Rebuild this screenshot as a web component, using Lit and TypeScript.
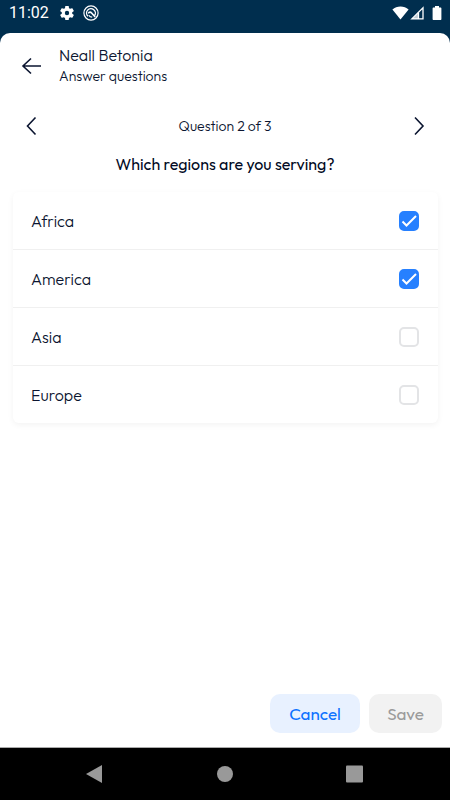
import { LitElement, html, css } from "lit";
import { customElement, state } from "lit/decorators.js";

interface Region {
  name: string;
  checked: boolean;
}

@customElement("status-bar")
class StatusBar extends LitElement {
  static styles = css`
    :host {
      display: flex;
      align-items: center;
      height: 26px;
      padding: 0 8px 0 9px;
      color: #fff;
      font: 16px/26px Roboto, sans-serif;
    }
    svg {
      display: block;
    }
    .left,
    .right {
      display: flex;
      align-items: center;
    }
    .left {
      flex: 1;
      gap: 8px;
    }
    .time {
      margin-right: 2px;
    }
    .right {
      gap: 1px;
    }
    .battery {
      margin-left: 7px;
    }
  `;

  render() {
    return html`
      <div class="left">
        <span class="time">11:02</span>
        <svg width="16" height="16" viewBox="1 1 22 22" fill="#fff" aria-hidden="true">
          <path
            d="M19.14 12.94c.04-.3.06-.61.06-.94s-.02-.64-.07-.94l2.03-1.58c.18-.14.23-.41.12-.61l-1.92-3.32c-.12-.22-.37-.29-.59-.22l-2.39.96c-.5-.38-1.03-.7-1.62-.94l-.36-2.54c-.04-.24-.24-.41-.48-.41h-3.84c-.24 0-.43.17-.47.41l-.36 2.54c-.59.24-1.13.57-1.62.94l-2.39-.96c-.22-.08-.47 0-.59.22L2.74 8.87c-.12.21-.08.47.12.61l2.03 1.58c-.05.3-.09.63-.09.94s.02.64.07.94l-2.03 1.58c-.18.14-.23.41-.12.61l1.92 3.32c.12.22.37.29.59.22l2.39-.96c.5.38 1.03.7 1.62.94l.36 2.54c.05.24.24.41.48.41h3.84c.24 0 .44-.17.47-.41l.36-2.54c.59-.24 1.13-.56 1.62-.94l2.39.96c.22.08.47 0 .59-.22l1.92-3.32c.12-.22.07-.47-.12-.61l-2.01-1.58zM12 15a3 3 0 1 1 0-6 3 3 0 0 1 0 6z"
          />
        </svg>
        <svg width="16" height="16" viewBox="0 0 16 16" fill="none" stroke="#fff" aria-hidden="true">
          <circle cx="8" cy="8" r="7.100" stroke-width="1.200" />
          <path d="M5 11.300A4.400 4.400 0 1 1 11.400 10.800" stroke-width="1.400" />
          <path d="M5.200 8.300C6.200 6.700 7.800 6.900 8.600 8.100L12.200 12" stroke-width="1.600" />
          <path d="M5.800 10.300c.8 1.200 2 1.900 3.400 1.900" stroke-width="1.200" />
        </svg>
      </div>
      <div class="right">
        <svg width="17" height="14" viewBox="0 0 17 14" fill="#fff" aria-hidden="true">
          <path d="M8.5 13.6.4 3.6C2.6 1.5 5.4.5 8.500.5s5.900 1 8.100 3.100z" />
        </svg>
        <svg width="14" height="14" viewBox="0 0 14 14" aria-hidden="true">
          <path d="M1.800 12.900 13 1.700v11.200z" fill="none" stroke="#fff" stroke-width="1.300" />
          <path d="M8.500 13V6.500" fill="none" stroke="#fff" stroke-width="1.300" />
          <path d="M2 13 8.500 6.500V13z" fill="#fff" fill-opacity="0.75" />
        </svg>
        <svg class="battery" width="10" height="14" viewBox="0 0 10 14" fill="#fff" aria-hidden="true">
          <path d="M3 0h4v1.400h1.400c.6 0 1 .4 1 1V13c0 .6-.4 1-1 1H1.600c-.6 0-1-.4-1-1V2.400c0-.6.4-1 1-1H3z" />
        </svg>
      </div>
    `;
  }
}

@customElement("navigation-bar")
class NavigationBar extends LitElement {
  static styles = css`
    :host {
      box-sizing: border-box;
      display: flex;
      justify-content: center;
      align-items: center;
      gap: 106px;
      height: 53px;
      background: #000;
      border-top: 1px solid #aaa;
    }
    button {
      display: block;
      padding: 0;
      border: 0;
      background: none;
      cursor: pointer;
    }
    svg {
      display: block;
      fill: #999;
    }
  `;

  render() {
    return html`
      <button aria-label="Back">
        <svg width="24" height="24" viewBox="0 0 24 24"><path d="M3 12 19 3v18z" /></svg>
      </button>
      <button aria-label="Home">
        <svg width="24" height="24" viewBox="0 0 24 24"><circle cx="12" cy="12" r="8" /></svg>
      </button>
      <button aria-label="Overview">
        <svg width="24" height="24" viewBox="0 0 24 24"><rect x="3" y="3.500" width="17" height="17" rx="1" /></svg>
      </button>
    `;
  }
}

@customElement("app-root")
class AppRoot extends LitElement {
  @state() private regions: Region[] = [
    { name: "Africa", checked: true },
    { name: "America", checked: true },
    { name: "Asia", checked: false },
    { name: "Europe", checked: false },
  ];

  static styles = css`
    :host {
      display: flex;
      flex-direction: column;
      min-height: 100vh;
      background: #002e4e;
      color: #0b1530;
      font-family: Outfit, Lato, sans-serif;
      font-weight: 300;
    }
    * {
      box-sizing: border-box;
    }
    svg {
      display: block;
      fill: none;
    }
    button {
      font: inherit;
      border: 0;
      cursor: pointer;
    }
    .sheet {
      display: flex;
      flex-direction: column;
      flex: 1;
      margin-top: 7px;
      background: #fff;
      border-radius: 10px 10px 0 0;
    }
    .header {
      display: flex;
      align-items: center;
      gap: 15px;
      padding: 12px 20px 0;
    }
    .icon {
      padding: 0;
      background: none;
      color: #0b1530;
    }
    .name,
    .subtitle,
    .step,
    .question {
      margin: 0;
      font-weight: 300;
    }
    .name {
      font-size: 16px;
      line-height: 21px;
    }
    .subtitle {
      font-size: 14px;
      line-height: 21px;
    }
    .pager {
      display: flex;
      align-items: center;
      justify-content: space-between;
      padding: 0 19px;
      margin-top: 27px;
    }
    .step {
      font-size: 14px;
      line-height: 24px;
    }
    .question {
      margin-top: 14px;
      text-align: center;
      font-size: 16px;
      font-weight: 400;
      line-height: 24px;
      color: #020a24;
    }
    .card {
      list-style: none;
      margin: 16px 12px 0 13px;
      padding: 0;
      border-radius: 6px;
      box-shadow: 0 2px 6px rgba(0, 0, 0, 0.05);
    }
    .card li + li {
      border-top: 1px solid #f0f0f0;
    }
    .row {
      display: flex;
      align-items: center;
      justify-content: space-between;
      height: 57px;
      padding: 0 19px 0 18px;
      font-size: 16px;
      cursor: pointer;
    }
    .box {
      display: grid;
    }
    .box > * {
      grid-area: 1 / 1;
    }
    .box input {
      appearance: none;
      width: 20px;
      height: 20px;
      margin: 0;
      border: 2px solid #e3e4e6;
      border-radius: 5px;
      background: #fff;
      cursor: pointer;
    }
    .box input:checked {
      border-color: #2680ff;
      background: #2680ff;
    }
    .box svg {
      pointer-events: none;
    }
    .actions {
      display: flex;
      justify-content: flex-end;
      gap: 9px;
      margin-top: auto;
      padding: 24px 8px 14px;
    }
    .action {
      height: 39px;
      padding: 0;
      border-radius: 10px;
      font-size: 17px;
      font-weight: 400;
    }
    .cancel {
      width: 90px;
      background: #e8f1ff;
      color: #0d72ff;
    }
    .save {
      width: 73px;
      background: #f2f2f2;
      color: #9b9b9b;
      cursor: default;
    }
  `;

  private toggle(index: number) {
    this.regions = this.regions.map((region, i) =>
      i === index ? { ...region, checked: !region.checked } : region
    );
  }

  private renderRegion(region: Region, index: number) {
    return html`
      <li>
        <label class="row">
          <span>${region.name}</span>
          <span class="box">
            <input type="checkbox" .checked=${region.checked} @change=${() => this.toggle(index)} />
            <svg width="20" height="20" viewBox="0 0 20 20" stroke="#fff" stroke-width="2" aria-hidden="true">
              <path d="M3.500 10.500 7.500 14.500 17 5" />
            </svg>
          </span>
        </label>
      </li>
    `;
  }

  render() {
    return html`
      <status-bar></status-bar>
      <main class="sheet">
        <header class="header">
          <button class="icon" aria-label="Go back">
            <svg width="24" height="24" viewBox="0 0 24 24" stroke="currentColor" stroke-width="1.600">
              <path d="M21 12H3M11 4.500 3 12l8 7.500" />
            </svg>
          </button>
          <div>
            <h1 class="name">Neall Betonia</h1>
            <p class="subtitle">Answer questions</p>
          </div>
        </header>
        <nav class="pager">
          <button class="icon" aria-label="Previous question">
            <svg width="24" height="24" viewBox="0 0 24 24" stroke="currentColor" stroke-width="1.600">
              <path d="M16.500 3.500 8.500 12l8 8.500" />
            </svg>
          </button>
          <p class="step">Question 2 of 3</p>
          <button class="icon" aria-label="Next question">
            <svg width="24" height="24" viewBox="0 0 24 24" stroke="currentColor" stroke-width="1.600">
              <path d="M8 3.500 16 12l-8 8.500" />
            </svg>
          </button>
        </nav>
        <h2 class="question">Which regions are you serving?</h2>
        <ul class="card">
          ${this.regions.map((region, index) => this.renderRegion(region, index))}
        </ul>
        <div class="actions">
          <button class="action cancel">Cancel</button>
          <button class="action save" disabled>Save</button>
        </div>
      </main>
      <navigation-bar></navigation-bar>
    `;
  }
}
